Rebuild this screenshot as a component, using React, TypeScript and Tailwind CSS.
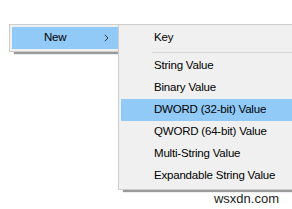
const SUB_ITEMS = [
  "String Value",
  "Binary Value",
  "DWORD (32-bit) Value",
  "QWORD (64-bit) Value",
  "Multi-String Value",
  "Expandable String Value",
];

const font = { fontFamily: '"Liberation Sans", Arial, sans-serif' };

export default function App() {
  return (
    <div
      className="relative w-[292px] h-[209px] overflow-hidden bg-white text-[11.5px] tracking-[-0.2px] text-black"
      style={font}
    >
      <div className="flex items-start pt-[24px] pl-[9px]">
        {/* parent menu */}
        <div className="w-[109px] shrink-0 bg-[#f0f0f0] border border-[#cdcdcd] border-r-0 p-[2px] pr-0 shadow-[4px_3px_1px_-1px_rgba(0,0,0,0.4)]">
          <div className="h-[22px] bg-[#91c9f7] flex items-center pl-[32px] pr-[8px]">
            <span className="flex-1">New</span>
            <svg width="5" height="8" viewBox="0 0 5 8" className="mr-[1px]">
              <path d="M0.8 0.8 L4 4 L0.8 7.2" fill="none" stroke="#333" strokeWidth="1" />
            </svg>
          </div>
        </div>

        {/* submenu */}
        <div className="w-[200px] shrink-0 bg-[#f0f0f0] border border-[#cdcdcd] border-r-0 py-[2px] pl-[2px] shadow-[4px_3px_1px_-1px_rgba(0,0,0,0.4)]">
          <div className="h-[22px] flex items-center pl-[33px]">Key</div>
          <div className="h-[6px] flex items-center pl-[31px]">
            <div className="h-px w-full bg-[#d7d7d7]" />
          </div>
          {SUB_ITEMS.map((label) => (
            <div
              key={label}
              className={
                label === "DWORD (32-bit) Value"
                  ? "h-[22px] flex items-center pl-[33px] bg-[#91c9f7]"
                  : "h-[22px] flex items-center pl-[33px]"
              }
            >
              {label}
            </div>
          ))}
        </div>
      </div>

      <div className="absolute right-[13px] bottom-[4px] text-[13px] tracking-normal text-[#222] leading-none">
        wsxdn.com
      </div>
    </div>
  );
}
